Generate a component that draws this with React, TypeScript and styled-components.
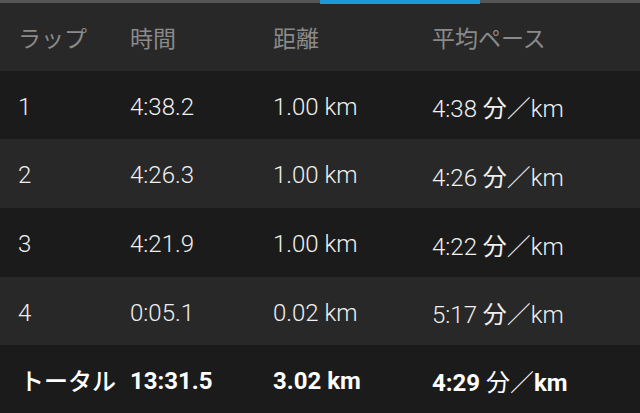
import React from "react";
import styled, { createGlobalStyle } from "styled-components";

const Global = createGlobalStyle`
  html, body { margin: 0; padding: 0; background: #1b1b1b; }
  body { width: 640px; height: 413px; overflow: hidden; }
`;

const Screen = styled.div`
  width: 640px;
  height: 413px;
  display: flex;
  flex-direction: column;
  background: #1b1b1b;
  font-family: Roboto, "Noto Sans CJK JP", sans-serif;
`;

const TabBar = styled.div`
  height: 4px;
  display: grid;
  grid-template-columns: 320px 160px 1fr;
  background: #282828;
`;

const TabSeg = styled.div<{ $active?: boolean }>`
  height: ${(p) => (p.$active ? "4px" : "3px")};
  background: ${(p) => (p.$active ? "#1a9bd8" : "#555555")};
`;

const Row = styled.div<{ $h: number; $dark?: boolean }>`
  height: ${(p) => p.$h}px;
  display: grid;
  grid-template-columns: 112px 143px 159px 1fr;
  align-items: center;
  padding-left: 18px;
  background: ${(p) => (p.$dark ? "#1b1b1b" : "#282828")};
`;

const HeadCell = styled.div`
  font-family: "Noto Sans CJK JP", sans-serif;
  font-size: 23px;
  font-weight: 400;
  color: #8a8a8a;
  padding-bottom: 2px;
`;

const Cell = styled.div<{ $bold?: boolean }>`
  font-family: Roboto, "Noto Sans CJK JP", sans-serif;
  font-size: 24px;
  font-weight: ${(p) => (p.$bold ? 700 : 300)};
  color: ${(p) => (p.$bold ? "#ffffff" : "#f0f0f0")};
  white-space: nowrap;
  padding-top: 3px;
`;

const Label = styled(Cell)`
  font-family: "Noto Sans CJK JP", sans-serif;
  font-size: 24px;
  font-weight: 500;
  margin-left: 2px;
  padding-top: 1px;
`;

const Jp = styled.span`
  font-family: "Noto Sans CJK JP", sans-serif;
  font-weight: 400;
  font-size: 24px;
`;

const Slash = styled.span`
  font-family: "Noto Sans CJK JP", sans-serif;
  font-weight: 300;
  font-size: 24px;
`;

const laps = [
  { n: "1", t: "4:38.2", d: "1.00 km", p: "4:38", h: 68 },
  { n: "2", t: "4:26.3", d: "1.00 km", p: "4:26", h: 69 },
  { n: "3", t: "4:21.9", d: "1.00 km", p: "4:22", h: 69 },
  { n: "4", t: "0:05.1", d: "0.02 km", p: "5:17", h: 68 },
];

const Pace: React.FC<{ v: string; bold?: boolean }> = ({ v, bold }) => (
  <Cell $bold={bold}>
    {v} <Jp>分</Jp>
    <Slash>／</Slash>km
  </Cell>
);

export default function App() {
  return (
    <Screen>
      <Global />
      <TabBar>
        <TabSeg />
        <TabSeg $active />
        <TabSeg />
      </TabBar>
      <Row $h={67}>
        <HeadCell>ラップ</HeadCell>
        <HeadCell>時間</HeadCell>
        <HeadCell>距離</HeadCell>
        <HeadCell>平均ペース</HeadCell>
      </Row>
      {laps.map((l, i) => (
        <Row key={l.n} $h={l.h} $dark={i % 2 === 0}>
          <Cell>{l.n}</Cell>
          <Cell>{l.t}</Cell>
          <Cell>{l.d}</Cell>
          <Pace v={l.p} />
        </Row>
      ))}
      <Row $h={68} $dark>
        <Label $bold>トータル</Label>
        <Cell $bold>13:31.5</Cell>
        <Cell $bold>3.02 km</Cell>
        <Pace v="4:29" bold />
      </Row>
    </Screen>
  );
}
